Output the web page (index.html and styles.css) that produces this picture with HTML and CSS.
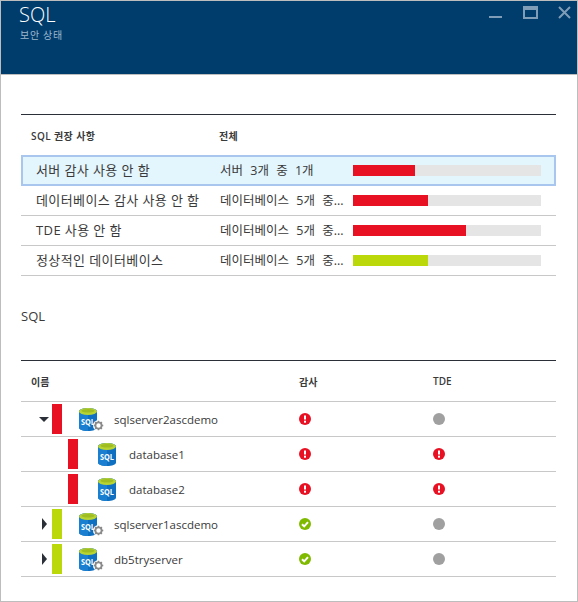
FILE: index.html
```html
<!DOCTYPE html>
<html lang="ko">
<head>
  <meta charset="UTF-8">
  <title>SQL</title>
  <link rel="stylesheet" href="styles.css">
</head>
<body>

<svg class="defs" width="0" height="0">
  <symbol id="db" viewBox="0 0 18 23">
    <path d="M0 3.5C0 1.5 4 0 9 0s9 1.500 9 3.500v16c0 2-4 3.500-9 3.500s-9-1.500-9-3.500z" fill="#0f6fc0"/>
    <path d="M9 7v16c-5 0-9-1.500-9-3.500v-16z" fill="#1a7fd0"/>
    <ellipse cx="9" cy="3.500" rx="9" ry="3.500" fill="#b8d432"/>
    <ellipse cx="9" cy="2.800" rx="6.500" ry="1.800" fill="#9fbc22"/>
  </symbol>
  <symbol id="gear" viewBox="0 0 12 12">
    <circle cx="6" cy="6" r="6" fill="#fff"/>
    <circle cx="6" cy="6" r="3.400" fill="none" stroke="#8a8a8a" stroke-width="2"/>
    <path d="M6 .8v2M6 9.200v2M.8 6h2M9.200 6h2M2.300 2.300l1.400 1.400M8.300 8.300l1.400 1.400M2.300 9.700l1.400-1.400M8.300 3.700l1.400-1.400" stroke="#8a8a8a" stroke-width="1.600"/>
  </symbol>
  <symbol id="warn" viewBox="0 0 12 12">
    <circle cx="6" cy="6" r="6" fill="#e81123"/>
    <path d="M6 2.500v4" stroke="#fff" stroke-width="2"/>
    <rect x="5" y="7.700" width="2" height="2" fill="#fff"/>
  </symbol>
  <symbol id="ok" viewBox="0 0 12 12">
    <circle cx="6" cy="6" r="6" fill="#7fba00"/>
    <path d="M3 6.200l2.200 2.200L9 4.200" fill="none" stroke="#fff" stroke-width="2"/>
  </symbol>
  <symbol id="none" viewBox="0 0 12 12">
    <circle cx="6" cy="6" r="6" fill="#a0a0a0"/>
  </symbol>
</svg>

<div class="blade">
  <header class="blade-head">
    <div>
      <h1 class="blade-title">SQL</h1>
      <div class="blade-sub">보안 상태</div>
    </div>
    <div class="win-controls">
      <svg class="win-min" width="13" height="2"><rect width="13" height="2" fill="#7f9db6"/></svg>
      <svg class="win-max" width="15" height="13"><rect x="1" y="1" width="13" height="11" fill="none" stroke="#7f9db6" stroke-width="2"/><rect x="1" y="1" width="13" height="3" fill="#7f9db6"/></svg>
      <svg class="win-close" width="13" height="13"><path d="M1 1l11 11M12 1L1 12" stroke="#7f9db6" stroke-width="2"/></svg>
    </div>
  </header>

  <section class="summary">
    <div class="summary-head">
      <span>SQL 권장 사항</span>
      <span>전체</span>
    </div>
    <div class="summary-row selected">
      <span>서버 감사 사용 안 함</span>
      <span class="count">서버 3개 중 1개</span>
      <div class="bar"><div class="bar-fill red" style="width: 33%"></div></div>
    </div>
    <div class="summary-row">
      <span>데이터베이스 감사 사용 안 함</span>
      <span class="count">데이터베이스 5개 중...</span>
      <div class="bar"><div class="bar-fill red" style="width: 40%"></div></div>
    </div>
    <div class="summary-row">
      <span>TDE 사용 안 함</span>
      <span class="count">데이터베이스 5개 중...</span>
      <div class="bar"><div class="bar-fill red" style="width: 60%"></div></div>
    </div>
    <div class="summary-row">
      <span>정상적인 데이터베이스</span>
      <span class="count">데이터베이스 5개 중...</span>
      <div class="bar"><div class="bar-fill lime" style="width: 40%"></div></div>
    </div>
  </section>

  <h2 class="section-title">SQL</h2>

  <section class="tree">
    <div class="tree-head">
      <span>이름</span>
      <span>감사</span>
      <span>TDE</span>
    </div>

    <div class="tree-row">
      <div class="name">
        <span class="arrow down"></span>
        <span class="flag red"></span>
        <span class="server-icon"><svg class="db"><use href="#db"/><text x="9" y="16.500" class="db-label" textLength="14" lengthAdjust="spacingAndGlyphs">SQL</text></svg><svg class="gear"><use href="#gear"/></svg></span>
        <span>sqlserver2ascdemo</span>
      </div>
      <svg class="status"><use href="#warn"/></svg>
      <svg class="status"><use href="#none"/></svg>
    </div>

    <div class="tree-row child">
      <div class="name">
        <span class="flag red"></span>
        <svg class="db"><use href="#db"/><text x="9" y="16.500" class="db-label" textLength="14" lengthAdjust="spacingAndGlyphs">SQL</text></svg>
        <span>database1</span>
      </div>
      <svg class="status"><use href="#warn"/></svg>
      <svg class="status"><use href="#warn"/></svg>
    </div>

    <div class="tree-row child">
      <div class="name">
        <span class="flag red"></span>
        <svg class="db"><use href="#db"/><text x="9" y="16.500" class="db-label" textLength="14" lengthAdjust="spacingAndGlyphs">SQL</text></svg>
        <span>database2</span>
      </div>
      <svg class="status"><use href="#warn"/></svg>
      <svg class="status"><use href="#warn"/></svg>
    </div>

    <div class="tree-row">
      <div class="name">
        <span class="arrow"></span>
        <span class="flag lime"></span>
        <span class="server-icon"><svg class="db"><use href="#db"/><text x="9" y="16.500" class="db-label" textLength="14" lengthAdjust="spacingAndGlyphs">SQL</text></svg><svg class="gear"><use href="#gear"/></svg></span>
        <span>sqlserver1ascdemo</span>
      </div>
      <svg class="status"><use href="#ok"/></svg>
      <svg class="status"><use href="#none"/></svg>
    </div>

    <div class="tree-row">
      <div class="name">
        <span class="arrow"></span>
        <span class="flag lime"></span>
        <span class="server-icon"><svg class="db"><use href="#db"/><text x="9" y="16.500" class="db-label" textLength="14" lengthAdjust="spacingAndGlyphs">SQL</text></svg><svg class="gear"><use href="#gear"/></svg></span>
        <span>db5tryserver</span>
      </div>
      <svg class="status"><use href="#ok"/></svg>
      <svg class="status"><use href="#none"/></svg>
    </div>
  </section>
</div>

</body>
</html>
```

FILE: styles.css
```css
body {
  margin: 0;
  background-color: #fff;
  color: #3a3a3a;
  font-family: "Open Sans", "Noto Sans CJK KR", sans-serif;
  font-size: 12px;
}

.defs {
  display: block;
  height: 0;
}

.db-label {
  font-family: "Open Sans", sans-serif;
  font-size: 9px;
  font-weight: 700;
  fill: #fff;
  text-anchor: middle;
}

.blade {
  box-sizing: border-box;
  width: 578px;
  height: 602px;
  border: 1px solid #bdbdbd;
}

.blade-head {
  box-sizing: border-box;
  display: flex;
  justify-content: space-between;
  height: 74px;
  padding: 2px 0 0 18px;
  background-color: #003c6c;
  border-bottom: 1px solid #bdbdbd;
}

.blade-title {
  margin: 0;
  color: #fff;
  font-size: 20px;
  font-weight: 300;
  line-height: 24px;
}

.blade-sub {
  margin-top: 1px;
  margin-left: 1px;
  color: #9db8cf;
  font-size: 10px;
  letter-spacing: .7px;
  line-height: 14px;
}

.win-controls {
  display: flex;
  align-items: flex-start;
}

.win-controls svg {
  display: block;
}

.win-min {
  margin: 13px 21px 0 0;
}

.win-max {
  margin: 3px 20px 0 0;
}

.win-close {
  margin: 3px 6px 0 0;
}

.summary {
  margin: 39px 21px 0 20px;
  border-top: 1px solid #2b3038;
}

.summary-head {
  display: flex;
  align-items: center;
  height: 40px;
  padding-left: 10px;
  font-size: 10px;
  font-weight: 600;
  letter-spacing: .4px;
}

.summary-head span:first-child {
  width: 188px;
}

.summary-row {
  box-sizing: border-box;
  display: grid;
  grid-template-columns: 184px 133px 188px;
  align-items: center;
  height: 30px;
  padding-left: 15px;
  border-bottom: 1px solid #c8c8c8;
  font-size: 13px;
  letter-spacing: .4px;
  white-space: nowrap;
}

.summary-row span {
  padding-bottom: 2px;
}

.summary-row.selected {
  height: 31px;
  border-bottom: none;
  background-color: #e3f5fd;
  outline: 2px solid #a9c6ee;
  outline-offset: -2px;
}

.count {
  font-size: 12.500px;
  letter-spacing: 0;
  word-spacing: 4px;
}

.bar {
  height: 11px;
  background-color: #e5e5e5;
}

.bar-fill {
  height: 100%;
}

.red {
  background-color: #e81123;
}

.lime {
  background-color: #bad80a;
}

.section-title {
  margin: 31px 0 0 20px;
  font-size: 13px;
  font-weight: 400;
  line-height: 18px;
}

.tree {
  margin: 35px 21px 0 20px;
  border-top: 1px solid #2b3038;
}

.tree-head,
.tree-row {
  box-sizing: border-box;
  display: grid;
  grid-template-columns: 278px 134px 1fr;
  align-items: center;
  border-bottom: 1px solid #c8c8c8;
}

.tree-head {
  height: 41px;
  font-size: 10px;
  font-weight: 600;
}

.tree-head span:first-child {
  padding-left: 10px;
}

.tree-row {
  height: 35px;
  font-size: 11.500px;
}

.name {
  display: flex;
  align-items: center;
  height: 30px;
  padding-left: 18px;
}

.child .name {
  padding-left: 47px;
}

.arrow {
  width: 0;
  height: 0;
  margin: 0 5px 0 3px;
  border-style: solid;
  border-width: 6px 0 6px 5px;
  border-color: transparent transparent transparent #2b3038;
}

.arrow.down {
  margin: 0 3px 0 0;
  border-width: 5px 5px 0;
  border-color: #2b3038 transparent transparent;
}

.flag {
  width: 10px;
  height: 30px;
  margin-right: 17px;
}

.child .flag {
  margin-right: 20px;
}

.server-icon {
  position: relative;
  display: block;
  width: 25px;
  height: 23px;
  margin-right: 10px;
}

.db {
  display: block;
  width: 18px;
  height: 23px;
}

.child .db {
  margin-right: 13px;
}

.gear {
  position: absolute;
  right: 0;
  bottom: 0;
  width: 11px;
  height: 11px;
}

.status {
  display: block;
  width: 12px;
  height: 12px;
}
```
